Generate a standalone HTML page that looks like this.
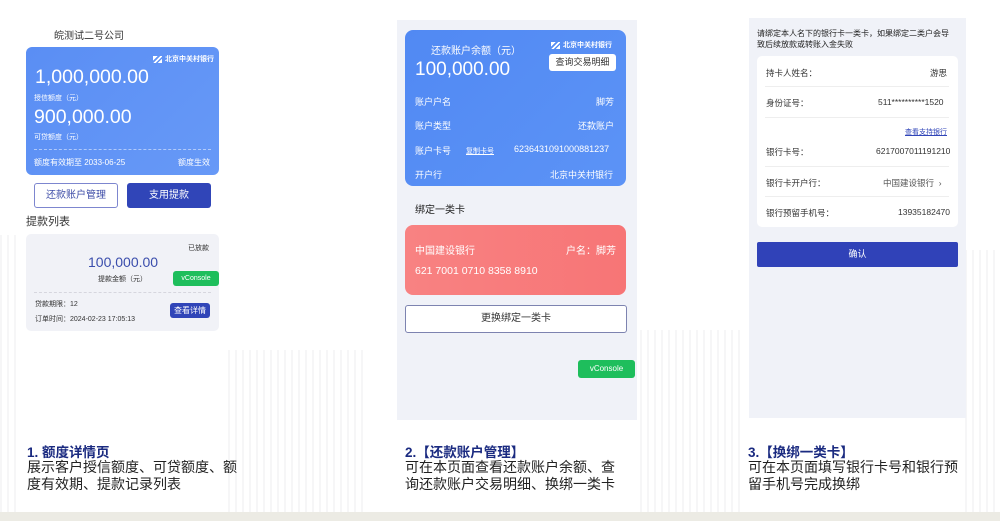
<!DOCTYPE html>
<html><head><meta charset="utf-8"><style>
*{margin:0;padding:0;box-sizing:border-box}
body{width:1000px;height:521px;background:#fff;position:relative;overflow:hidden;font-family:"Liberation Sans","Noto Sans CJK SC",sans-serif;color:#333}
.a{position:absolute}
.stripes{position:absolute;background:repeating-linear-gradient(90deg,#f0f0f2 0 2px,transparent 2px 7px);opacity:.6}
.logo{font-size:7px;color:#fff;font-weight:bold;white-space:nowrap}
.logo b{display:inline-block;width:9px;height:7px;background:linear-gradient(135deg,#fff 0 30%,transparent 30% 45%,#fff 45% 60%,transparent 60% 75%,#fff 75%);vertical-align:middle;margin-right:3px}
.w{color:#fff}
.cap{font-size:14px;line-height:17px;color:#222;width:215px}
.ttl{font-size:13.5px;font-weight:bold;color:#1a2a80}
</style></head><body>
<div class="stripes" style="left:0;top:235px;width:18px;height:280px"></div>
<div class="stripes" style="left:228px;top:350px;width:140px;height:165px"></div>
<div class="stripes" style="left:640px;top:330px;width:100px;height:185px"></div>
<div class="stripes" style="left:965px;top:250px;width:35px;height:265px"></div>
<div class="a" style="left:0;top:512px;width:1000px;height:9px;background:#ecebe4"></div>

<!-- Panel 1 -->
<div class="a" style="left:20px;top:20px;width:210px;height:320px;background:#fff"></div>
<div class="a" style="left:54px;top:27px;font-size:10px;color:#333">皖测试二号公司</div>
<div class="a" style="left:26px;top:47px;width:193px;height:128px;background:linear-gradient(135deg,#5a8ef4,#6799f7);border-radius:6px"></div>
<div class="a logo" style="left:153px;top:54px"><b></b>北京中关村银行</div>
<div class="a w" style="left:35px;top:66px;font-size:19.5px">1,000,000.00</div>
<div class="a w" style="left:34px;top:93px;font-size:7px">授信额度（元）</div>
<div class="a w" style="left:34px;top:106px;font-size:19.5px">900,000.00</div>
<div class="a w" style="left:34px;top:132px;font-size:7px">可贷额度（元）</div>
<div class="a" style="left:34px;top:149px;width:177px;border-top:1px dashed rgba(255,255,255,.5)"></div>
<div class="a w" style="left:34px;top:157px;font-size:8px">额度有效期至 2033-06-25</div>
<div class="a w" style="left:178px;top:157px;font-size:8px">额度生效</div>
<div class="a" style="left:34px;top:183px;width:84px;height:25px;border:1px solid #7d86cf;border-radius:3px;font-size:10px;color:#3f4ea8;text-align:center;line-height:23px">还款账户管理</div>
<div class="a" style="left:127px;top:183px;width:84px;height:25px;background:#3045b8;border-radius:3px;font-size:10px;color:#fff;text-align:center;line-height:25px">支用提款</div>
<div class="a" style="left:26px;top:213px;font-size:11px">提款列表</div>
<div class="a" style="left:26px;top:234px;width:193px;height:97px;background:#f1f2f7;border-radius:5px"></div>
<div class="a" style="left:188px;top:243px;font-size:7px">已放款</div>
<div class="a" style="left:88px;top:254px;font-size:14px;color:#3a4dac">100,000.00</div>
<div class="a" style="left:98px;top:274px;font-size:7px">提款金额（元）</div>
<div class="a" style="left:173px;top:271px;width:46px;height:15px;background:#1ebe5c;border-radius:3px;color:#fff;font-size:7px;text-align:center;line-height:15px">vConsole</div>
<div class="a" style="left:34px;top:292px;width:177px;border-top:1px dashed #d6d6de"></div>
<div class="a" style="left:35px;top:299px;font-size:7px">贷款期限：12</div>
<div class="a" style="left:35px;top:314px;font-size:7px">订单时间：2024-02-23 17:05:13</div>
<div class="a" style="left:170px;top:303px;width:40px;height:15px;background:#3045b8;border-radius:3px;color:#fff;font-size:8px;text-align:center;line-height:15px">查看详情</div>

<!-- Panel 2 -->
<div class="a" style="left:397px;top:20px;width:240px;height:400px;background:#f0f2f8"></div>
<div class="a" style="left:405px;top:30px;width:221px;height:156px;background:linear-gradient(135deg,#5189f3,#5c93f6);border-radius:8px"></div>
<div class="a logo" style="left:551px;top:40px"><b></b>北京中关村银行</div>
<div class="a w" style="left:431px;top:42px;font-size:10px">还款账户余额（元）</div>
<div class="a" style="left:549px;top:54px;width:67px;height:17px;background:#fff;border-radius:3px;font-size:9px;color:#333;text-align:center;line-height:17px">查询交易明细</div>
<div class="a w" style="left:415px;top:59px;font-size:19px">100,000.00</div>
<div class="a w" style="left:415px;top:95px;font-size:9px">账户户名</div><div class="a w" style="left:596px;top:95px;font-size:9px">脚芳</div>
<div class="a w" style="left:415px;top:119px;font-size:9px">账户类型</div><div class="a w" style="left:578px;top:119px;font-size:9px">还款账户</div>
<div class="a w" style="left:415px;top:144px;font-size:9px">账户卡号</div><div class="a w" style="left:466px;top:146px;font-size:7px;text-decoration:underline">复制卡号</div><div class="a w" style="left:514px;top:144px;font-size:9px">6236431091000881237</div>
<div class="a w" style="left:415px;top:168px;font-size:9px">开户行</div><div class="a w" style="left:550px;top:168px;font-size:9px">北京中关村银行</div>
<div class="a" style="left:415px;top:201px;font-size:10px;color:#222">绑定一类卡</div>
<div class="a" style="left:405px;top:225px;width:221px;height:70px;background:linear-gradient(90deg,#f88282,#f77576);border-radius:8px"></div>
<div class="a w" style="left:415px;top:242px;font-size:10px">中国建设银行</div><div class="a w" style="left:566px;top:242px;font-size:10px">户名：脚芳</div>
<div class="a w" style="left:415px;top:265px;font-size:10.5px">621 7001 0710 8358 8910</div>
<div class="a" style="left:405px;top:305px;width:222px;height:28px;border:1px solid #7d83b0;border-radius:3px;background:#fff;font-size:10px;color:#333;text-align:center;line-height:26px">更换绑定一类卡</div>
<div class="a" style="left:578px;top:360px;width:57px;height:18px;background:#1ebe5c;border-radius:3px;color:#fff;font-size:8px;text-align:center;line-height:18px">vConsole</div>

<!-- Panel 3 -->
<div class="a" style="left:749px;top:18px;width:217px;height:400px;background:#f0f2f8"></div>
<div class="a" style="left:757px;top:28px;font-size:8px;line-height:11px;color:#222;width:196px">请绑定本人名下的银行卡一类卡，如果绑定二类户会导致后续放款或转账入金失败</div>
<div class="a" style="left:757px;top:56px;width:201px;height:171px;background:#fff;border-radius:5px"></div>
<div class="a" style="left:766px;top:67px;font-size:8.5px">持卡人姓名：</div><div class="a" style="left:930px;top:67px;font-size:8.5px">游思</div>
<div class="a" style="left:765px;top:86px;width:184px;border-top:1px solid #eee"></div>
<div class="a" style="left:766px;top:97px;font-size:8.5px">身份证号：</div><div class="a" style="left:878px;top:97px;font-size:8.5px">511**********1520</div>
<div class="a" style="left:765px;top:117px;width:184px;border-top:1px solid #eee"></div>
<div class="a" style="left:905px;top:127px;font-size:7px;color:#3045b8;text-decoration:underline">查看支持银行</div>
<div class="a" style="left:766px;top:146px;font-size:8.5px">银行卡号：</div><div class="a" style="left:876px;top:146px;font-size:8.5px">6217007011191210</div>
<div class="a" style="left:765px;top:166px;width:184px;border-top:1px solid #eee"></div>
<div class="a" style="left:766px;top:177px;font-size:8.5px">银行卡开户行：</div><div class="a" style="left:883px;top:177px;font-size:8.5px;color:#555">中国建设银行 &nbsp;›</div>
<div class="a" style="left:765px;top:196px;width:184px;border-top:1px solid #eee"></div>
<div class="a" style="left:766px;top:207px;font-size:8.5px">银行预留手机号：</div><div class="a" style="left:898px;top:207px;font-size:8.5px">13935182470</div>
<div class="a" style="left:757px;top:242px;width:201px;height:25px;background:#3042b8;border-radius:2px;color:#fff;font-size:9px;text-align:center;line-height:25px">确认</div>

<!-- captions -->
<div class="a ttl" style="left:27px;top:441px">1. 额度详情页</div>
<div class="a cap" style="left:27px;top:459px">展示客户授信额度、可贷额度、额度有效期、提款记录列表</div>
<div class="a ttl" style="left:405px;top:441px">2.【还款账户管理】</div>
<div class="a cap" style="left:405px;top:459px">可在本页面查看还款账户余额、查询还款账户交易明细、换绑一类卡</div>
<div class="a ttl" style="left:748px;top:441px">3.【换绑一类卡】</div>
<div class="a cap" style="left:748px;top:459px">可在本页面填写银行卡号和银行预留手机号完成换绑</div>
</body></html>
